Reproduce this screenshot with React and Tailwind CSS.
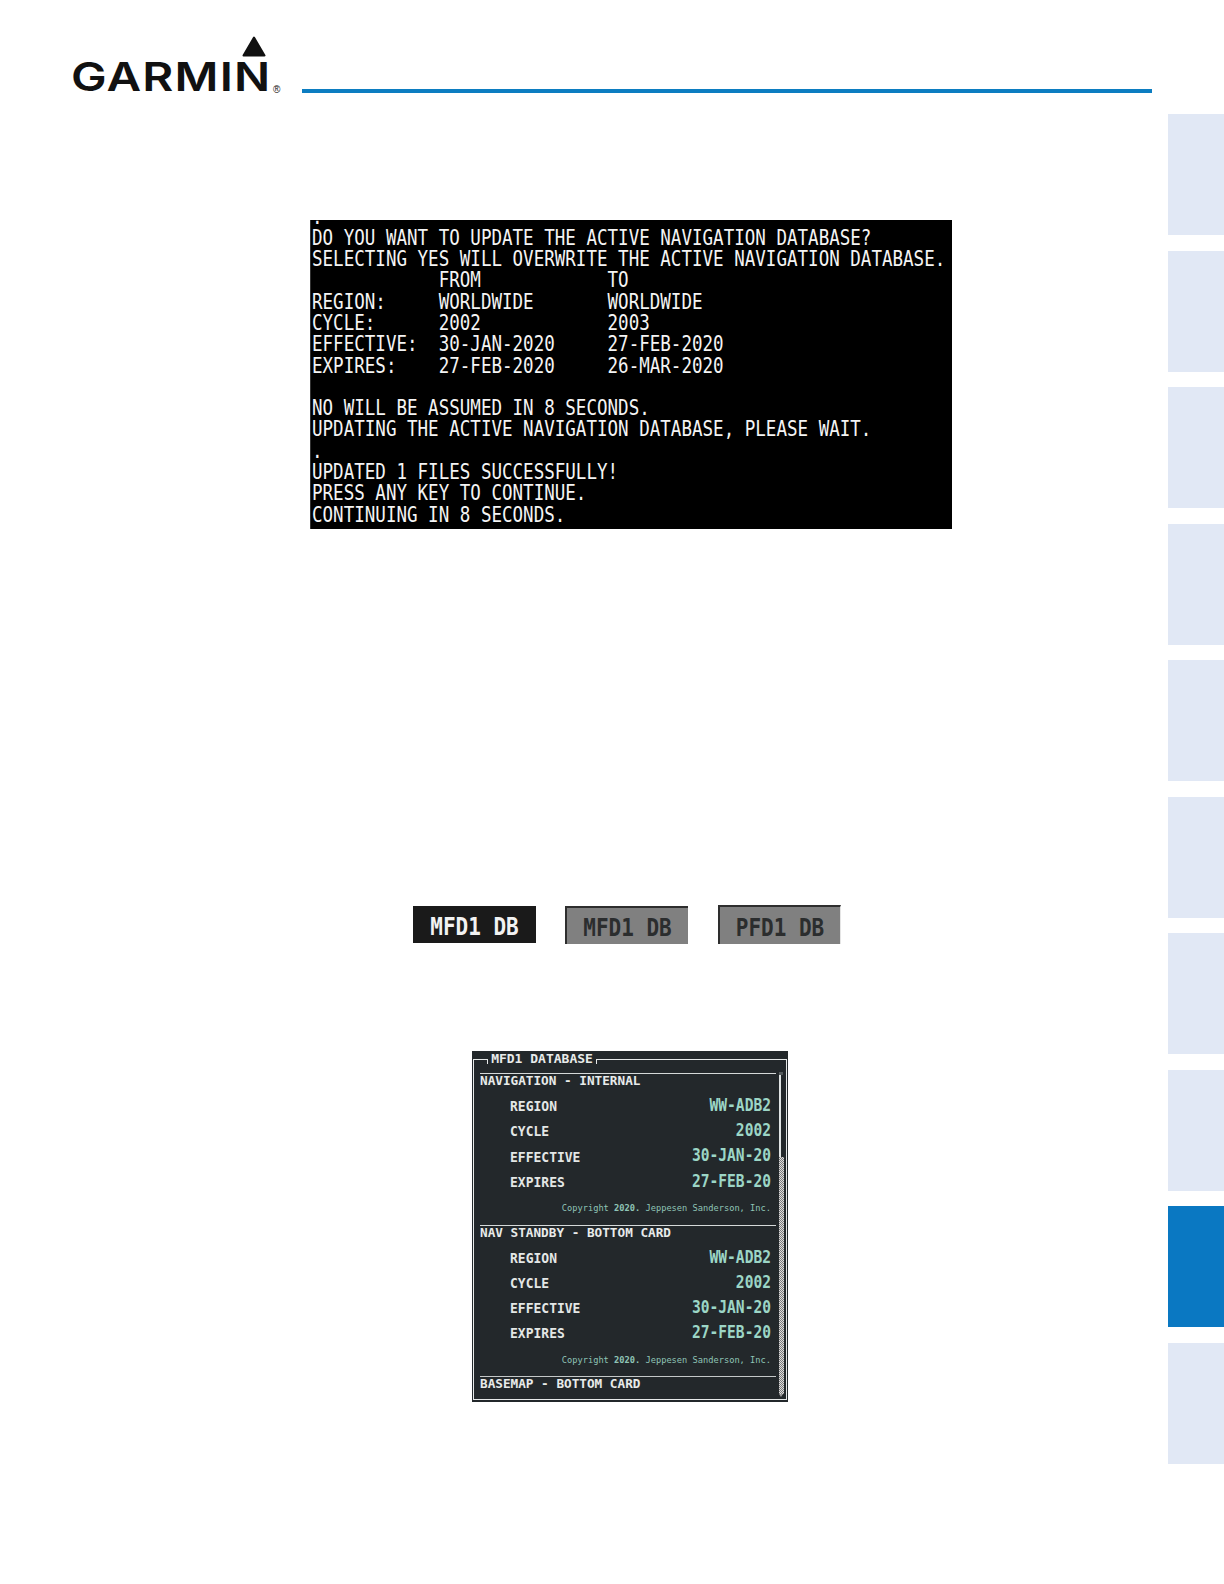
const terminal = `.
DO YOU WANT TO UPDATE THE ACTIVE NAVIGATION DATABASE?
SELECTING YES WILL OVERWRITE THE ACTIVE NAVIGATION DATABASE.
            FROM            TO
REGION:     WORLDWIDE       WORLDWIDE
CYCLE:      2002            2003
EFFECTIVE:  30-JAN-2020     27-FEB-2020
EXPIRES:    27-FEB-2020     26-MAR-2020

NO WILL BE ASSUMED IN 8 SECONDS.
UPDATING THE ACTIVE NAVIGATION DATABASE, PLEASE WAIT.
.
UPDATED 1 FILES SUCCESSFULLY!
PRESS ANY KEY TO CONTINUE.
CONTINUING IN 8 SECONDS.`.split("\n");

const mono = "font-['DejaVu_Sans_Mono',monospace]";

function Logo() {
  return (
    <div className="relative ml-[73px] w-[212px] h-[60px] shrink-0">
      <svg className="absolute left-[169px] top-0" width="24" height="21" viewBox="0 0 24 21">
        <path d="M12 1.5 L22.5 19.5 L1.5 19.5 Z" fill="#111" stroke="#111" strokeWidth="2" strokeLinejoin="round" />
      </svg>
      <span className="absolute -left-[2px] top-[17px] origin-left scale-x-[1.19] text-[40px] leading-[48px] font-semibold tracking-[1px] text-[#111] font-['Inter',sans-serif]">
        GARMIN
      </span>
      <span className="absolute left-[200px] top-[48px] text-[10px] leading-[12px] text-[#111] font-['Liberation_Sans',sans-serif]">®</span>
    </div>
  );
}

function SoftKey({ label, active, className }) {
  return (
    <div
      className={`w-[123px] flex items-center justify-center pt-[6px] font-bold text-[21px] ${mono} ${className} ${
        active
          ? "bg-[#1a1a1a] text-[#f2f2f2]"
          : "bg-[#808080] text-[#2b2d2e] border-t-2 border-l-2 border-[#2e2e2e]"
      }`}
    >
      <span className="scale-y-[1.2] inline-block">{label}</span>
    </div>
  );
}

function Row({ label, value }) {
  return (
    <div className="h-[25.2px] flex items-center justify-between pl-[30px] pr-[5px]">
      <span className="text-[13px] font-bold text-[#e4e7e6] scale-y-[1.1] inline-block translate-y-[0.5px]">{label}</span>
      <span className="text-[14.6px] font-bold text-[#9cd6c6] -translate-y-px scale-y-[1.2] inline-block">{value}</span>
    </div>
  );
}

function Section({ title }) {
  return (
    <section className="h-[151.7px]">
      <div className="h-px bg-[#d5d9d9]" />
      <div className="h-[19.4px] text-[12.7px] leading-[14px] font-bold text-[#e8ebea]">{title}</div>
      <Row label="REGION" value="WW-ADB2" />
      <Row label="CYCLE" value="2002" />
      <Row label="EFFECTIVE" value="30-JAN-20" />
      <Row label="EXPIRES" value="27-FEB-20" />
      <div className="h-[27px] pt-[2px] flex items-center justify-end pr-[5px] text-[8.7px] text-[#8fc4b6]">
        <span>
          Copyright <span className="font-bold">2020.</span> Jeppesen Sanderson, Inc.
        </span>
      </div>
    </section>
  );
}

function Panel() {
  return (
    <div className={`relative mt-[107px] ml-[472px] w-[316px] h-[351px] bg-[#23282b] overflow-hidden ${mono}`}>
      <div className="absolute left-px right-px top-[8px] bottom-[2px] border border-[#e6e9e9]" />
      <div className="absolute left-[15px] top-0 w-[110px] h-[15px] bg-[#23282b] text-[13px] leading-[15px] font-bold text-[#e8ebea] text-center">
        MFD1 DATABASE
        <div className="absolute left-0 top-[8px] w-px h-[5px] bg-[#e6e9e9]" />
        <div className="absolute right-0 top-[8px] w-px h-[5px] bg-[#e6e9e9]" />
      </div>
      <div className="absolute right-[4px] top-[21px] bottom-[5px] w-[5px] flex flex-col">
        <div className="h-[3px] w-[4px] bg-[#555b5d]" />
        <div className="h-[82px] w-[2px] bg-[#dfe3e3]" />
        <div className="flex-1 bg-[repeating-conic-gradient(#dcdcdc_0_25%,#7a7a7a_0_50%)] bg-[length:2px_2px]" />
        <div className="h-0 w-0 border-x-[2px] border-x-transparent border-t-[3px] border-t-[#999]" />
      </div>
      <div className="pt-[22px] pl-[8px] w-[304px]">
        <Section title="NAVIGATION - INTERNAL" />
        <Section title="NAV STANDBY - BOTTOM CARD" />
        <div className="h-px bg-[#c4c8c8]" />
        <div className="text-[12.7px] leading-[14px] font-bold text-[#e8ebea]">BASEMAP - BOTTOM CARD</div>
      </div>
    </div>
  );
}

export default function App() {
  const tabs = [0, 1, 2, 3, 4, 5, 6, 7, 8, 9];
  return (
    <div className="w-[1224px] h-[1584px] bg-white flex overflow-hidden">
      <main className="w-[1168px] shrink-0">
        <header className="h-[100px] pt-[36px] flex pr-[16px]">
          <Logo />
          <div className="ml-[17px] mt-[53px] flex-1 h-[4px] bg-[#0c7dc1]" />
        </header>
        <div className="flow-root mt-[120px] ml-[310px] w-[642px] h-[309px] bg-black border-l border-[#333]">
          <div className={`-mt-[13.5px] pl-[1px] text-[17.54px] leading-[21.3px] text-[#f4f4f4] whitespace-pre ${mono}`}>
            {terminal.map((l, i) => (
              <div key={i} className="h-[21.3px] scale-y-[1.17] origin-center">
                {l || " "}
              </div>
            ))}
          </div>
        </div>
        <div className="mt-[376px] ml-[413px] h-[39px] flex items-start">
          <SoftKey label="MFD1 DB" active className="mt-px h-[37px]" />
          <SoftKey label="MFD1 DB" className="mt-px ml-[29px] h-[38px]" />
          <SoftKey label="PFD1 DB" className="ml-[30px] h-[39px] border-r border-r-[#e5e5e5]" />
        </div>
        <Panel />
      </main>
      <aside className="w-[56px] pt-[114px] flex flex-col gap-[15.5px]">
        {tabs.map((t) => (
          <div key={t} className={`h-[121px] ${t === 8 ? "bg-[#0a78c2]" : "bg-[#e1e8f5]"}`} />
        ))}
      </aside>
    </div>
  );
}
